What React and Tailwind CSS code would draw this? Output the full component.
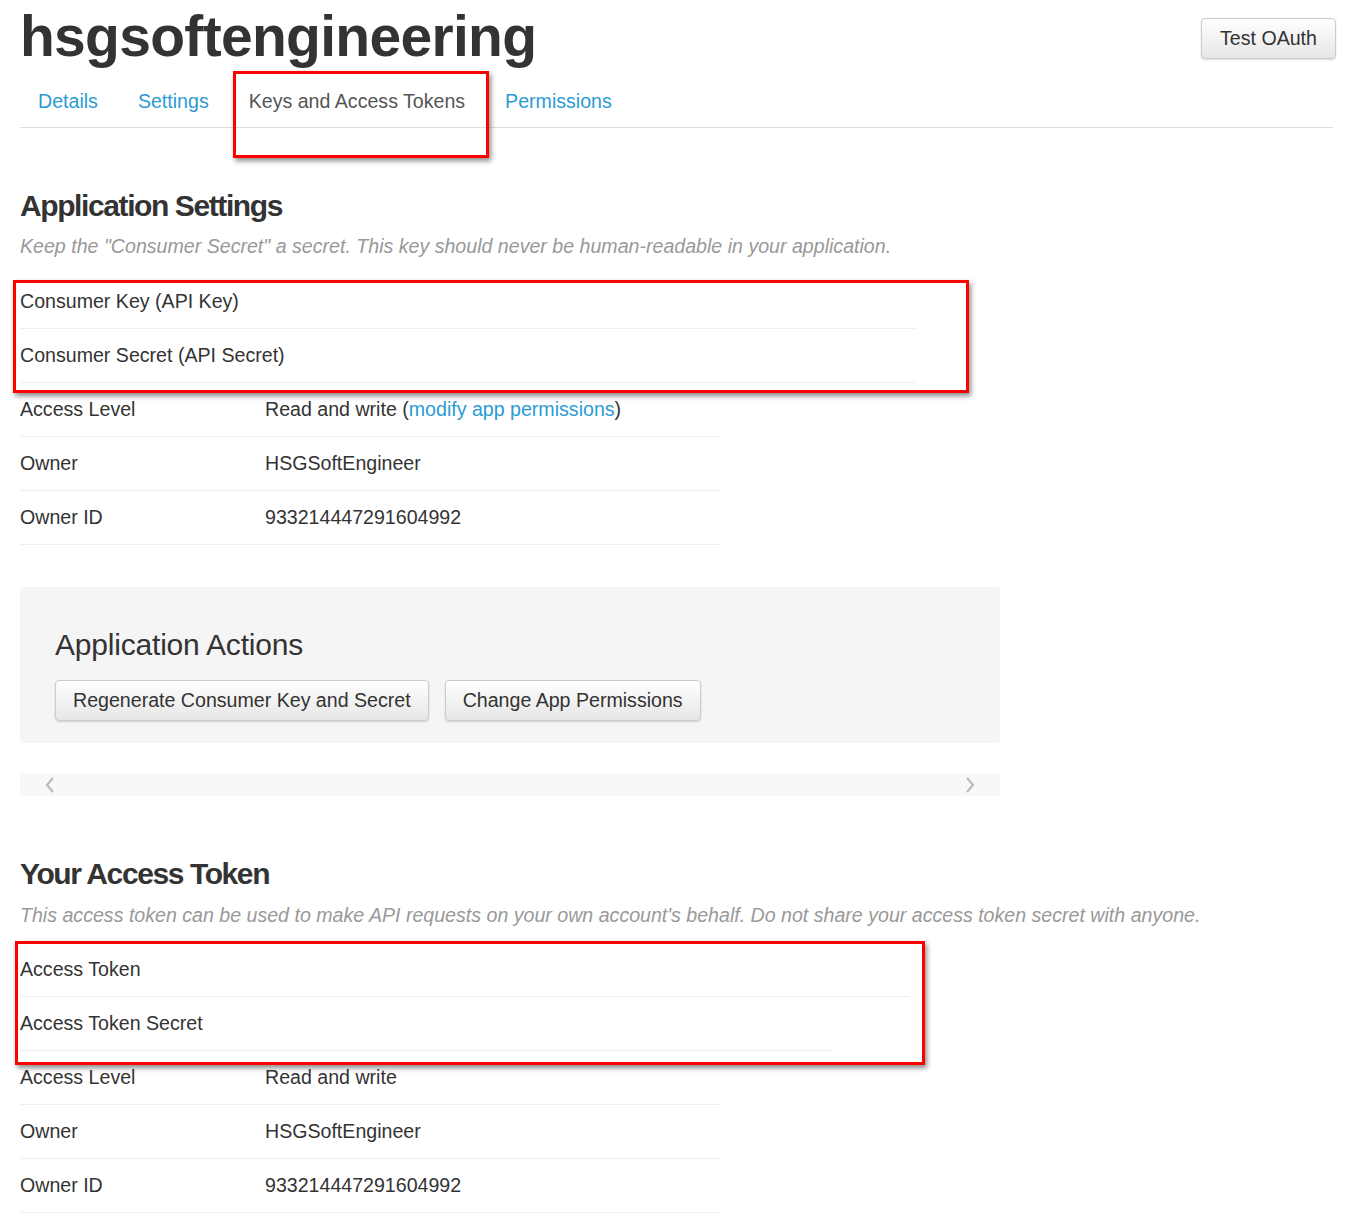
import React from "react";

const font = { fontFamily: '"Liberation Sans", Arial, sans-serif' };

function Row({ label, value, lineWidth = "w-[700px]" }) {
  return (
    <div className={`flex h-[54px] items-center border-b border-[#eeeeee] ${lineWidth}`}>
      {value ? (
        <>
          <div className="w-[245px] shrink-0">{label}</div>
          <div>{value}</div>
        </>
      ) : (
        <div>{label}</div>
      )}
    </div>
  );
}

function Btn({ children, className = "" }) {
  return (
    <button
      className={`h-[41px] rounded-[4px] border border-[#cccccc] bg-gradient-to-b from-white to-[#e6e6e6] px-[17px] text-[19.6px] text-[#333333] shadow-[0_1px_2px_rgba(0,0,0,0.15)] ${className}`}
    >
      {children}
    </button>
  );
}

function Callout({ className }) {
  return (
    <div
      className={`pointer-events-none absolute border-[3px] border-[#ff0000] shadow-[2px_3px_5px_rgba(0,0,0,0.45)] ${className}`}
    />
  );
}

export default function App() {
  const tabs = ["Details", "Settings", "Keys and Access Tokens", "Permissions"];

  return (
    <div className="relative min-h-[1213px] bg-white text-[19.6px] text-[#333333]" style={font}>
      <div className="px-5 pb-10">
        {/* header */}
        <div className="flex items-start justify-between">
          <h1 className="h-[72px] text-[57px] font-bold leading-[72px] tracking-[-0.7px] text-[#333333]">
            hsgsoftengineering
          </h1>
          <Btn className="mt-[18px] mr-[-3px] w-[135px] px-0">Test OAuth</Btn>
        </div>

        {/* tabs */}
        <div className="flex h-[56px] items-center border-b border-[#dddddd] pt-[4px]">
          {tabs.map((t, i) => (
            <span
              key={t}
              className={`${i === 0 ? "pl-[18px]" : "pl-[40px]"} ${
                i === 2 ? "text-[#555555]" : "text-[#2b9bd3]"
              }`}
            >
              {t}
            </span>
          ))}
        </div>

        {/* application settings */}
        <h2 className="mt-[60px] text-[30px] font-bold leading-[36px] tracking-[-1.4px]">
          Application Settings
        </h2>
        <p className="mt-[10px] italic leading-[24px] text-[#999999]">
          Keep the "Consumer Secret" a secret. This key should never be human-readable in your application.
        </p>

        <div className="mt-[17px]">
          <Row label="Consumer Key (API Key)" lineWidth="w-[895px]" />
          <Row label="Consumer Secret (API Secret)" lineWidth="w-[895px]" />
          <Row
            label="Access Level"
            value={
              <>
                Read and write (<span className="text-[#2b9bd3]">modify app permissions</span>)
              </>
            }
          />
          <Row label="Owner" value="HSGSoftEngineer" />
          <Row label="Owner ID" value="933214447291604992" />
        </div>

        {/* application actions */}
        <div className="mt-[42px] w-[980px] rounded-[4px] bg-[#f5f5f5] px-[35px] pt-[40px] pb-[22px]">
          <h3 className="text-[30px] leading-[36px] tracking-[-0.2px]">Application Actions</h3>
          <div className="mt-[17px] flex gap-[16px]">
            <Btn className="h-[40px]">Regenerate Consumer Key and Secret</Btn>
            <Btn className="h-[40px]">Change App Permissions</Btn>
          </div>
        </div>

        {/* carousel strip */}
        <div className="mt-[30px] flex h-[23px] w-[980px] items-center justify-between bg-[#f8f8f8] px-[25px]">
          <svg width="10" height="16" viewBox="0 0 10 16" fill="none" stroke="#bbbbbb" strokeWidth="2.2">
            <path d="M8 1 L2 8 L8 15" />
          </svg>
          <svg width="10" height="16" viewBox="0 0 10 16" fill="none" stroke="#bbbbbb" strokeWidth="2.2">
            <path d="M2 1 L8 8 L2 15" />
          </svg>
        </div>

        {/* access token */}
        <h2 className="mt-[60px] text-[30px] font-bold leading-[36px] tracking-[-1.4px]">
          Your Access Token
        </h2>
        <p className="mt-[11px] italic leading-[24px] text-[#999999]">
          This access token can be used to make API requests on your own account's behalf. Do not share your access token secret with anyone.
        </p>

        <div className="mt-[16px]">
          <Row label="Access Token" lineWidth="w-[890px]" />
          <Row label="Access Token Secret" lineWidth="w-[813px]" />
          <Row label="Access Level" value="Read and write" />
          <Row label="Owner" value="HSGSoftEngineer" />
          <Row label="Owner ID" value="933214447291604992" />
        </div>
      </div>

      {/* annotation callouts */}
      <Callout className="left-[233px] top-[71px] h-[87px] w-[256px]" />
      <Callout className="left-[13px] top-[280px] h-[113px] w-[956px]" />
      <Callout className="left-[15px] top-[941px] h-[124px] w-[910px]" />
    </div>
  );
}
